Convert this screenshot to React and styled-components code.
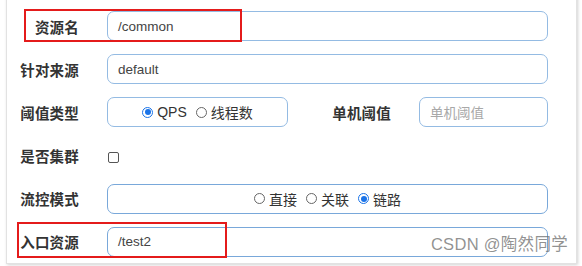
import React from "react";
import styled, { createGlobalStyle } from "styled-components";

const GlobalStyle = createGlobalStyle`
  body {
    margin: 0;
    background: #fff;
    font-family: "Liberation Sans", "Noto Sans CJK SC", sans-serif;
    overflow: hidden;
  }
`;

const Page = styled.div`
  width: 582px;
  height: 266px;
  overflow: hidden;
  position: relative;
`;

const Card = styled.div`
  position: relative;
  margin: -8px 0 0 6px;
  width: 571px;
  height: 272px;
  box-sizing: border-box;
  padding: 18px 28px 0 0;
  background: #fff;
  border: 1px solid #e2e2e2;
  box-shadow: 1px 1px 3px rgba(0, 0, 0, 0.18);
  display: flex;
  flex-direction: column;
  gap: 13.2px;
`;

const Row = styled.div`
  display: grid;
  grid-template-columns: 100px 1fr;
  height: 30px;
  align-items: center;
`;

const Label = styled.label`
  text-align: right;
  padding-right: 28px;
  font-size: 14.5px;
  font-weight: bold;
  color: #333;
  letter-spacing: 0.2px;
`;

const Field = styled.div`
  height: 30px;
  box-sizing: border-box;
  border: 1.5px solid ${(p) => (p.$strong ? "#79a8da" : "#94bbe3")};
  border-radius: 7px;
  padding: 0 10px;
  display: flex;
  align-items: center;
  justify-content: ${(p) => (p.$center ? "center" : "flex-start")};
  font-size: 13.5px;
  color: #444;
  gap: 9px;
`;

const Placeholder = styled.span`
  color: #a8a8a8;
`;

const Split = styled.div`
  display: grid;
  grid-template-columns: 181px 1fr 129px;
  align-items: center;
`;

const SubLabel = styled(Label)`
  padding-right: 28px;
`;

const Option = styled.span`
  display: inline-flex;
  align-items: center;
  gap: 4px;
  color: #333;
  font-size: 14px;
`;

const Radio = styled.span`
  width: 11px;
  height: 11px;
  border-radius: 50%;
  box-sizing: border-box;
  border: ${(p) => (p.$on ? "1.5px solid #1a73e8" : "1px solid #666")};
  display: inline-flex;
  align-items: center;
  justify-content: center;
  &::after {
    content: "";
    width: 6px;
    height: 6px;
    border-radius: 50%;
    background: ${(p) => (p.$on ? "#1a73e8" : "transparent")};
  }
`;

const Check = styled.span`
  display: block;
  width: 11px;
  height: 11px;
  box-sizing: border-box;
  border: 1px solid #555;
  border-radius: 2px;
  margin-left: 1px;
  margin-top: 3px;
`;

const Mark = styled.div`
  position: absolute;
  border: 2px solid #e41b1b;
  box-sizing: border-box;
  pointer-events: none;
`;

const Watermark = styled.div`
  position: absolute;
  right: 14px;
  bottom: 11px;
  font-size: 16.5px;
  color: rgba(110, 110, 110, 0.75);
  letter-spacing: 0.3px;
`;

const App = () => {
  return (
    <Page>
      <GlobalStyle />
      <Card>
        <Row>
          <Label>资源名</Label>
          <Field>/common</Field>
        </Row>
        <Row>
          <Label>针对来源</Label>
          <Field>default</Field>
        </Row>
        <Row>
          <Label>阈值类型</Label>
          <Split>
            <Field $center>
              <Option><Radio $on />QPS</Option>
              <Option><Radio />线程数</Option>
            </Field>
            <SubLabel>单机阈值</SubLabel>
            <Field><Placeholder>单机阈值</Placeholder></Field>
          </Split>
        </Row>
        <Row>
          <Label>是否集群</Label>
          <div><Check /></div>
        </Row>
        <Row>
          <Label>流控模式</Label>
          <Field $center $strong>
            <Option><Radio />直接</Option>
            <Option><Radio />关联</Option>
            <Option><Radio $on />链路</Option>
          </Field>
        </Row>
        <Row>
          <Label>入口资源</Label>
          <Field $strong>/test2</Field>
        </Row>
      </Card>
      <Mark style={{ left: 24, top: 9, width: 218, height: 33 }} />
      <Mark style={{ left: 17, top: 222, width: 210, height: 36 }} />
      <Watermark>CSDN @陶然同学</Watermark>
    </Page>
  );
};

export default App;
